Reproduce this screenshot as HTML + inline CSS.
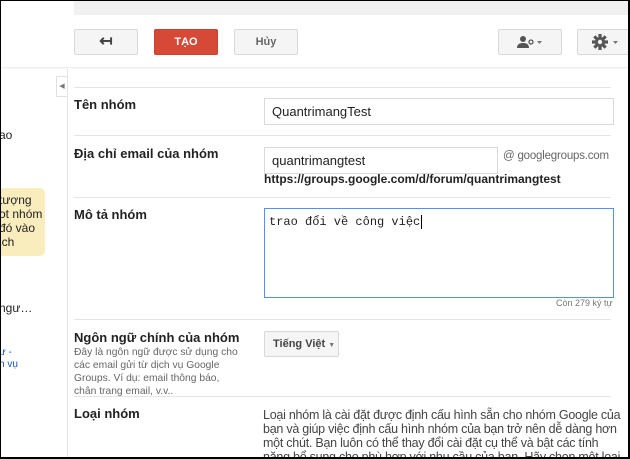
<!DOCTYPE html>
<html><head><meta charset="utf-8"><style>
*{box-sizing:border-box;margin:0;padding:0}
body{width:630px;height:459px;overflow:hidden;background:#000;font-family:"Liberation Sans",Arial,sans-serif;position:relative}
.page{position:absolute;left:1px;top:1px;width:627px;height:456px;background:#fff;overflow:hidden}
.a{position:absolute}
.btn{position:absolute;top:28px;height:26px;border:1px solid #d8d8d8;background:#f5f5f5;border-radius:2px;font-size:11px;font-weight:bold;color:#555;text-align:center;line-height:24px}
.lbl{position:absolute;left:73px;font-size:13px;font-weight:bold;color:#222}
.hr{position:absolute;left:73px;width:537px;height:1px;background:#e5e5e5}
.inp{position:absolute;border:1px solid #d9d9d9;font-size:13px;color:#222;padding-left:7px;line-height:25px}
.lt{position:absolute;font-size:12px;color:#222;left:-2px}
</style></head><body><div class="page">
<div class="a" style="left:73px;top:0;width:555px;height:14px;background:#f1f1f1"></div>
<div class="a" style="left:0;top:66px;width:627px;height:2px;background:linear-gradient(#e8e8e8,#fff)"></div>
<div class="btn" style="left:73px;width:64px;font-size:16px;color:#444">&#8612;</div>
<div class="btn" style="left:153px;width:64px;background:#d64937;border-color:#d04030;color:#fff">TẠO</div>
<div class="btn" style="left:233px;width:64px;font-weight:bold;color:#666">Hủy</div>
<div class="btn" style="left:497px;width:64px;color:#555"><svg width="28" height="14" viewBox="0 0 28 14" style="vertical-align:middle"><circle cx="7" cy="4" r="3" fill="#555"/><path d="M1 13c0-4 3-5 6-5s6 1 6 5z" fill="#555"/><circle cx="15" cy="7" r="2" fill="none" stroke="#555" stroke-width="1.3"/><path d="M21 6h5l-2.5 3z" fill="#777"/></svg></div>
<div class="btn" style="left:576px;width:60px;color:#555"><svg width="30" height="16" viewBox="0 0 30 16" style="vertical-align:middle"><g transform="translate(8 8)" fill="#555"><circle r="5"/><rect x="-1.6" y="-8" width="3.2" height="16"/><rect x="-8" y="-1.6" width="16" height="3.2"/><rect x="-1.6" y="-8" width="3.2" height="16" transform="rotate(45)"/><rect x="-1.6" y="-8" width="3.2" height="16" transform="rotate(-45)"/><circle r="2.2" fill="#f5f5f5"/></g><path d="M21 7h5l-2.5 3z" fill="#777"/></svg></div>
<div class="a" style="left:66px;top:68px;width:1px;height:390px;background:#e5e5e5"></div>
<div class="a" style="left:55px;top:75px;width:11px;height:21px;border:1px solid #e0e0e0;border-right:none;background:#fff;font-size:7px;color:#777;line-height:19px;text-align:center">◀</div>
<div class="lt" style="top:127px">ao</div>
<div class="a" style="left:-4px;top:187px;width:48px;height:68px;background:#f9edbe;border-radius:0 5px 5px 0"></div>
<div class="lt" style="top:192px">tượng</div>
<div class="lt" style="top:206px">ot nhóm</div>
<div class="lt" style="top:220px">đó vào</div>
<div class="lt" style="top:234px">ich</div>
<div class="lt" style="top:281px;font-size:8px">·</div>
<div class="lt" style="top:300px">ngư…</div>
<div class="lt" style="top:346px;font-size:10px;color:#15c">ư -</div>
<div class="lt" style="top:358px;font-size:10px;color:#15c">h vụ</div>
<div class="hr" style="top:86px"></div>
<div class="lbl" style="top:96px">Tên nhóm</div>
<div class="inp" style="left:263px;top:97px;width:350px;height:27px">QuantrimangTest</div>
<div class="hr" style="top:134px"></div>
<div class="lbl" style="top:145px">Địa chỉ email của nhóm</div>
<div class="inp" style="left:263px;top:146px;width:234px;height:27px">quantrimangtest</div>
<div class="a" style="left:502px;top:149px;font-size:11.5px;letter-spacing:-0.2px;color:#666">@ googlegroups.com</div>
<div class="a" style="left:263px;top:171px;font-size:12px;font-weight:bold;color:#222">https://groups.google.com/d/forum/quantrimangtest</div>
<div class="hr" style="top:196px"></div>
<div class="lbl" style="top:206px">Mô tả nhóm</div>
<div class="a" style="left:263px;top:207px;width:350px;height:90px;border:1px solid #4d90fe;font-family:'Liberation Mono',monospace;font-size:12px;padding:6px 4px;color:#222">trao đổi về công việc<span style="border-left:1px solid #000;margin-left:1px"></span></div>
<div class="a" style="left:555px;top:297px;font-size:9px;color:#777">Còn 279 ký tự</div>
<div class="hr" style="top:318px"></div>
<div class="lbl" style="top:329px">Ngôn ngữ chính của nhóm</div>
<div class="a" style="left:73px;top:345px;width:168px;font-size:10.3px;line-height:13px;color:#666">Đây là ngôn ngữ được sử dụng cho các email gửi từ dịch vụ Google Groups. Ví dụ: email thông báo, chân trang email, v.v..</div>
<div class="a" style="left:263px;top:330px;width:75px;height:26px;border:1px solid #d8d8d8;background:#f5f5f5;border-radius:2px;font-size:11px;font-weight:bold;color:#444;line-height:24px;padding-left:8px">Tiếng Việt <span style="font-size:7px;color:#777">▼</span></div>
<div class="hr" style="top:395px"></div>
<div class="lbl" style="top:405px">Loại nhóm</div>
<div class="a" style="left:262px;top:407px;width:360px;font-size:12.5px;letter-spacing:-0.25px;line-height:14px;color:#444">Loại nhóm là cài đặt được định cấu hình sẵn cho nhóm Google của bạn và giúp việc định cấu hình nhóm của bạn trở nên dễ dàng hơn một chút. Bạn luôn có thể thay đổi cài đặt cụ thể và bật các tính năng bổ sung cho phù hợp với nhu cầu của bạn. Hãy chọn một loại</div>
</div></body></html>
